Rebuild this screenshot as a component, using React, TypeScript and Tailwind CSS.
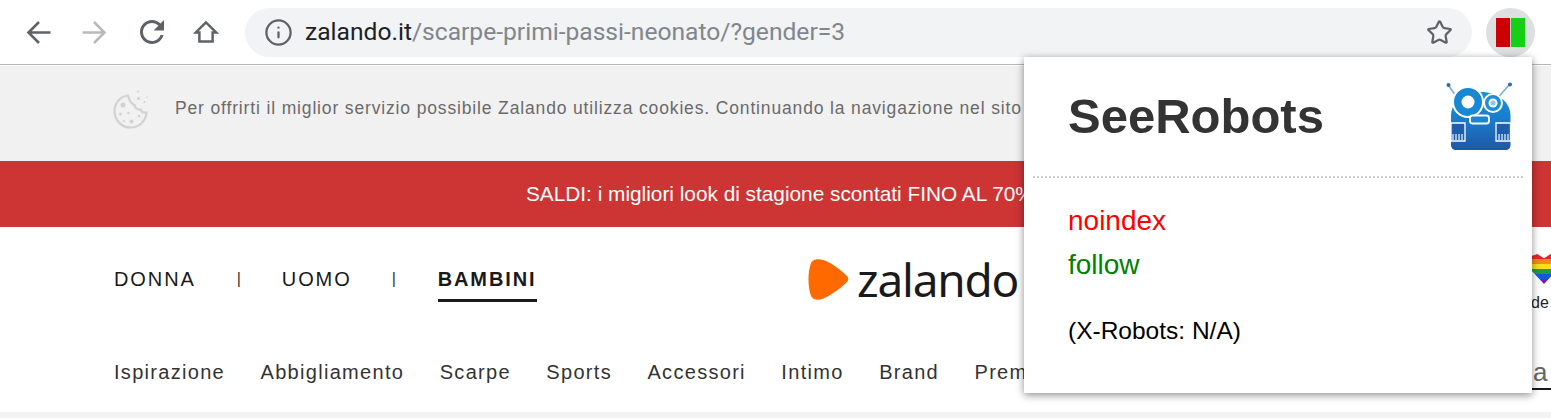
import { Info, Star } from "lucide-react";

const categories = ["Ispirazione", "Abbigliamento", "Scarpe", "Sports", "Accessori", "Intimo", "Brand", "Premium"];

function BackIcon({ color }: { color: string }) {
  return (
    <svg width="25" height="25" viewBox="0 0 25 25" fill="none" stroke={color} strokeWidth="2.600">
      <path d="M24.500 12.500H3M13 2 2.500 12.500 13 23" />
    </svg>
  );
}

function ForwardIcon({ color }: { color: string }) {
  return (
    <svg width="25" height="25" viewBox="0 0 25 25" fill="none" stroke={color} strokeWidth="2.600">
      <path d="M.5 12.500H22M12 2l10.500 10.500L12 23" />
    </svg>
  );
}

function ReloadIcon() {
  return (
    <svg width="36" height="36" viewBox="0 0 24 24" fill="#5f6368">
      <path d="M17.65 6.35C16.2 4.9 14.21 4 12 4c-4.42 0-7.99 3.58-7.99 8s3.57 8 7.99 8c3.73 0 6.84-2.55 7.73-6h-2.08c-.82 2.33-3.04 4-5.65 4-3.31 0-6-2.69-6-6s2.69-6 6-6c1.66 0 3.14.69 4.22 1.78L13 11h7V4l-2.350 2.350z" />
    </svg>
  );
}

function HomeIcon() {
  return (
    <svg width="26" height="26" viewBox="0 0 24 24" fill="none" stroke="#5f6368" strokeWidth="2.300" strokeLinejoin="miter">
      <path d="M12 3.200 2.600 12.400h3.300v8.400h12.200v-8.400h3.300z" />
    </svg>
  );
}

function CookieIcon() {
  return (
    <svg width="36" height="40" viewBox="0 0 36 40" fill="none">
      <path
        d="M15 6.500C7.500 7.500 1.500 13.500 1.500 22c0 9 7 16.500 16 16.500 8.500 0 15.500-6.500 16-15-2.800.5-5-.5-6-3-3 .3-5.500-1.500-6-4.500-3-.8-5-4-6.500-9.500z"
        stroke="#d2d2d2"
        strokeWidth="2.200"
      />
      <g fill="#d2d2d2">
        <circle cx="10" cy="16" r="2.500" />
        <circle cx="7.500" cy="25" r="1.500" />
        <circle cx="15.500" cy="24" r="1.300" />
        <circle cx="18.500" cy="32.500" r="2" />
        <circle cx="26" cy="27" r="1.300" />
        <circle cx="11" cy="32" r="1.100" />
        <circle cx="25.500" cy="9.500" r="1.600" />
        <circle cx="31.500" cy="13" r="1.100" />
        <circle cx="25" cy="2.500" r="1" />
        <circle cx="34" cy="8" r="0.800" />
      </g>
    </svg>
  );
}

function ZalandoMark() {
  return (
    <svg width="41" height="43" viewBox="0 0 41 43">
      <path
        d="M9 1.200C5.500 1.500 3.500 3 2.500 6.500-.2 15.500-.2 27.500 2.500 36.500c1 3.500 3 5 6.500 5.300 3.500.3 8-1.500 14-5.300 6-3.800 12-8.500 15.500-12 2.500-2.500 2.500-4.500 0-7C35 14 29 9.300 23 5.500 17 1.700 12.500.9 9 1.200z"
        fill="#ff6900"
      />
    </svg>
  );
}

function RobotLogo() {
  return (
    <svg width="66" height="70" viewBox="0 0 66 70" className="blur-[0.4px]">
      <defs>
        <linearGradient id="robotBody" x1="0" y1="0" x2="0" y2="1">
          <stop offset="0" stopColor="#1a92dc" />
          <stop offset="0.55" stopColor="#1a78c6" />
          <stop offset="1" stopColor="#2056a6" />
        </linearGradient>
      </defs>
      <g stroke="#7fb2d8" strokeWidth="1.800" strokeLinecap="round">
        <path d="M2.500 3.500 10 14" />
        <path d="M63.500 2.500 53 14.500" />
      </g>
      <circle cx="2.500" cy="3" r="2" fill="#2c6aa8" />
      <circle cx="64" cy="2.500" r="2" fill="#2c6aa8" />
      <path d="M5 34C5 20 18 10 35 10s29.500 10 29.500 24v29c0 3-2 5-5 5H10c-3 0-5-2-5-5z" fill="url(#robotBody)" />
      <circle cx="22" cy="20" r="15" fill="#1688d4" stroke="#fff" strokeWidth="2" />
      <circle cx="22" cy="20" r="6.500" fill="#fff" />
      <circle cx="47" cy="21" r="9" fill="#1d8fd8" stroke="#fff" strokeWidth="2" />
      <circle cx="47" cy="21" r="4.500" fill="#fff" />
      <circle cx="47" cy="21" r="2.500" fill="#8cc6ec" />
      <rect x="24" y="33.500" width="19" height="8" rx="2.500" fill="#1a86cf" stroke="#fff" strokeWidth="1.800" />
      <path d="M5 41h14v18H5zM50 41h14.500v18H50z" fill="#1c5fae" stroke="#fff" strokeWidth="1.300" />
      <path
        d="M7 52v6M10 52v6M13 52v6M16 52v6M53 52v6M56 52v6M59 52v6M62 52v6"
        stroke="#e1edf7"
        strokeWidth="1.300"
      />
    </svg>
  );
}

function RainbowHeart() {
  const stripes = ["bg-[#e8262a]", "bg-[#f28a1c]", "bg-[#f7e017]", "bg-[#1f9e3c]", "bg-[#1558e0]", "bg-[#7b1fa2]"];
  return (
    <div className="-ml-[2px] flex h-[30px] w-[30px] flex-col overflow-hidden [clip-path:polygon(50%_100%,5%_52%,0_25%,8%_7%,28%_0,50%_14%,72%_0,92%_7%,100%_25%,95%_52%)]">
      {stripes.map((s) => (
        <div key={s} className={`flex-1 ${s}`} />
      ))}
    </div>
  );
}

export default function App() {
  return (
    <div className="relative h-[418px] w-[1551px] overflow-hidden bg-white font-['Liberation_Sans',Arial,sans-serif]">
      {/* browser toolbar */}
      <div className="flex h-[65px] items-center border-b border-[#b8b8b8] bg-white">
        <div className="ml-[26px] flex w-[219px] items-center">
          <BackIcon color="#5f6368" />
          <div className="ml-[31px]">
            <ForwardIcon color="#b9babc" />
          </div>
          <div className="ml-[27px]">
            <ReloadIcon />
          </div>
          <div className="ml-[23px]">
            <HomeIcon />
          </div>
        </div>
        <div className="flex h-[49px] w-[1227px] items-center rounded-full bg-[#f1f3f4] pl-[19px] pr-[19px]">
          <Info size={29} color="#5f6368" strokeWidth={1.900} />
          <div className="ml-[12px] flex-1 text-[24.600px] font-['Roboto',sans-serif] leading-none text-[#80868b]">
            <span className="text-[#202124]">zalando.it</span>/scarpe-primi-passi-neonato/?gender=3
          </div>
          <Star size={27} color="#5f6368" strokeWidth={2} />
        </div>
        <div className="ml-[14px] flex h-[49px] w-[49px] items-center justify-center rounded-full bg-[#dedfe0]">
          <div className="flex gap-[1px]">
            <div className="h-[29px] w-[14px] bg-[#cc0000]" />
            <div className="h-[29px] w-[14px] bg-[#16d016]" />
          </div>
        </div>
      </div>

      {/* cookie bar */}
      <div className="h-[1px] bg-white" />
      <div className="flex h-[95px] items-center bg-[#f1f1f1] pb-[10px] pl-[113px]">
        <CookieIcon />
        <span className="ml-[26px] whitespace-nowrap text-[17.500px] tracking-[0.85px] text-[#6a6a6a]">
          Per offrirti il miglior servizio possibile Zalando utilizza cookies. Continuando la navigazione nel sito
        </span>
      </div>

      {/* sale banner */}
      <div className="flex h-[66px] items-center whitespace-nowrap bg-[#cd3434] pl-[526px] text-[20.800px] text-white">
        SALDI: i migliori look di stagione scontati FINO AL 70%
      </div>

      {/* main nav */}
      <div className="flex h-[108px] items-center pb-[4px] pl-[114px]">
        <div className="flex w-[694px] items-center text-[20px] tracking-[1.900px] text-[#1a1a1a]">
          <span>DONNA</span>
          <span className="ml-[41px] text-[16px] text-[#333]">|</span>
          <span className="ml-[39px]">UOMO</span>
          <span className="ml-[40px] text-[16px] text-[#333]">|</span>
          <span className="ml-[40px] border-b-[3px] border-[#1a1a1a] pb-[5px] pt-[8px] font-bold">BAMBINI</span>
        </div>
        <ZalandoMark />
        <span className="ml-[8px] text-[46px] font-normal leading-none tracking-[-1.200px] font-['Noto_Sans',sans-serif] text-[#1a1a1a]">
          zalando
        </span>
        <div className="ml-auto flex w-[20px] flex-col items-start self-start pt-[27px]">
          <RainbowHeart />
          <span className="mt-[7px] text-[16px] text-[#222]">de</span>
        </div>
      </div>

      {/* category nav */}
      <div className="relative flex h-[77px] items-start gap-[35.500px] whitespace-nowrap pl-[114px] pt-[22px] text-[20px] tracking-[1.300px] text-[#333]">
        {categories.map((c) => (
          <span key={c}>{c}</span>
        ))}
        <span className="absolute right-0 top-[18px] w-[18px] text-[26px] text-[#666]">a</span>
        <div className="absolute bottom-[22px] right-0 h-[2px] w-[284px] bg-[#1a1a1a]" />
      </div>
      <div className="h-[6px] bg-[#f3f3f3]" />

      {/* extension popup */}
      <div className="absolute left-[1024px] top-[57px] flex h-[336px] w-[508px] flex-col bg-white shadow-[0_2px_8px_rgba(0,0,0,0.45)]">
        <div className="mx-[9px] flex h-[121px] items-start justify-between border-b-2 border-dotted border-[#cccccc] pl-[35px] pr-[11px]">
          <h1 className="pt-[35px] text-[49px] font-bold leading-none text-[#333]">SeeRobots</h1>
          <div className="pt-[25px]">
            <RobotLogo />
          </div>
        </div>
        <div className="pl-[44px] pt-[21px] text-[28px] leading-[44px]">
          <div className="text-[#ff0000]">noindex</div>
          <div className="text-[#008000]">follow</div>
          <div className="pt-[22px] text-[24.500px] text-black">(X-Robots: N/A)</div>
        </div>
      </div>
    </div>
  );
}
